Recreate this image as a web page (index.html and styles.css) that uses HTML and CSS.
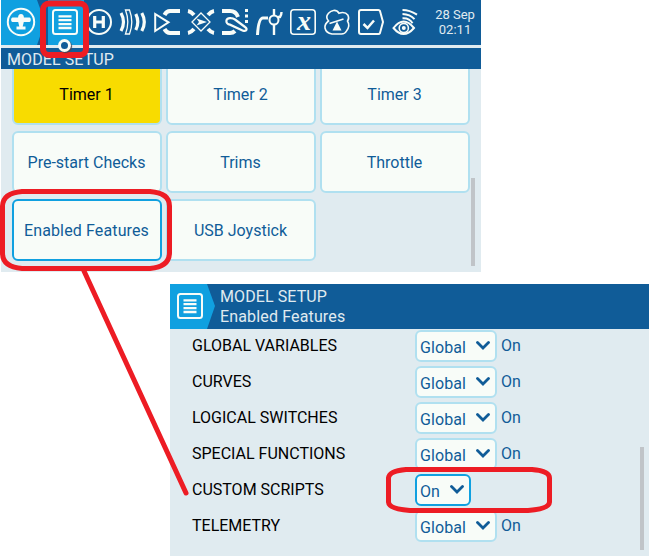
FILE: index.html
```html
<!DOCTYPE html>
<html lang="en">
<head>
<meta charset="utf-8">
<title>Model Setup</title>
<link rel="stylesheet" href="styles.css">
</head>
<body>
<main class="page">
  <section class="panel setup">
    <header class="topbar">
      <div class="home">
        <svg class="home-icon" viewBox="0 0 30 30"><circle cx="15" cy="15" r="13.2" fill="none" stroke="#f8fcf8" stroke-width="2"/><path d="M15 7c2 0 2.800 1.500 2.900 3.500h5.600c1.800 0 1.800 4.500 0 4.500h-5.700l-1.100 4.500h2.800v3h-9v-3h2.800L12.200 15H6.500c-1.800 0-1.800-4.500 0-4.500h5.600C12.200 8.500 13 7 15 7z" fill="#f8fcf8"/></svg>
      </div>
      <nav class="tabs">
        <span class="tab selected"><svg class="icon" viewBox="0 0 26 26"><rect x="1" y="1" width="24" height="24" rx="2.500"/><path class="lines" d="M6.500 7.300h13M6.500 11.200h13M6.500 15.100h13M6.500 19h13"/></svg></span>
        <svg class="icon" viewBox="0 0 26 26"><circle cx="13" cy="13" r="12"/><path d="M8.700 7v12M17.300 7v12M8.700 13h8.600" stroke-width="3.200"/></svg>
        <svg class="icon" viewBox="0 0 26 26"><path d="M1 4q5 9 0 18M15.800 5q4 8 0 16M21.800 4q5 9 0 18" stroke-width="3.200"/><path d="M5.500 1h4q4.600 12 0 24h-4q4.600-12 0-24z" stroke-width="1.300"/></svg>
        <svg class="icon" viewBox="0 0 26 26"><path d="M1.200 5v17L14.500 13.300z"/><path d="M26 2H16q-3.500 0-5.500 4M26 24H16q-3.500 0-5.500-4" stroke-width="4"/></svg>
        <svg class="icon" viewBox="0 0 26 26"><path d="M0 2q3 .5 6 4M26 2q-3 .5-6 4M0 24q3-.5 6-4M26 24q-3-.5-6-4" stroke-width="4"/><path d="M13 4l9 9-9 9-9-9z" stroke-width="1.300"/><path class="solid" d="M8.500 9.500L19 13 8.500 16.500l2.500-3.500z"/></svg>
        <svg class="icon" viewBox="0 0 26 26"><path d="M0 2h8q6 0 8 6M0 24h8q3 0 5-2" stroke-width="4"/><path d="M9 9.200c-6-1-6 6-1 6.500l13 6c4 1 4.500-2 2-3.700L13 10.500q-2-1.200-4-1.300z" stroke-width="2.200"/><path class="solid" d="M23 0h3v3h-3zM23 5.500h3v3h-3zM23 11h3v3h-3z"/></svg>
        <svg class="icon" viewBox="0 0 26 26"><path d="M1.500 26Q2.500 9 7 9h5" stroke-width="3"/><path d="M18 0v6M18 16v10M22 8h2q1.500-2 1.500-5" stroke-width="2.400"/><circle cx="18" cy="11" r="4.500"/></svg>
        <svg class="icon" viewBox="0 0 26 26"><rect x=".8" y=".8" width="24.400" height="24.400" rx="3" stroke-width="1.600"/><text x="14" y="21">x</text></svg>
        <svg class="icon" viewBox="0 0 26 26"><path d="M4.500 12Q1 8 4.500 4.200C7 1.500 12-.5 15 4.200q6-2 9 2 1.500 3.500-.5 5.800 3 5-1 10-1.500 3-5 3H8q-6-1-7-6-.5-4 3.500-7z" stroke-width="1.600"/><path d="M5.500 14.500L19.500 10" stroke-width="1.600"/><path class="solid" d="M13 12.500l4.500 9h-9z"/></svg>
        <svg class="icon" viewBox="0 0 26 26"><path d="M3 1h17.500q1 0 1.500 1l3 11-3 11q-.5 1-1.500 1H3q-2 0-2-2V3q0-2 2-2z"/><path d="M5.500 15l4 4 6.500-7.500" stroke-width="2.500"/></svg>
        <svg class="icon" viewBox="0 0 26 26"><path d="M1.500 19q10-13 20.500 0-10.500 12-20.500 0z"/><circle cx="11.800" cy="19" r="4.600" stroke-width="1.600"/><circle class="solid" cx="11.800" cy="19" r="2"/><path d="M10.500 9.300q7-.5 10 5M10.500 5q7.500.2 12 5.200M10.500 1q7 0 14.500 4.600"/></svg>
      </nav>
      <div class="clock">28 Sep<br>02:11</div>
      <i class="marker"></i>
    </header>
    <div class="title">MODEL SETUP</div>
    <div class="viewport">
      <div class="grid">
        <button class="tile active">Timer 1</button>
        <button class="tile">Timer 2</button>
        <button class="tile">Timer 3</button>
        <button class="tile">Pre-start Checks</button>
        <button class="tile">Trims</button>
        <button class="tile">Throttle</button>
        <button class="tile focused">Enabled Features</button>
        <button class="tile">USB Joystick</button>
      </div>
      <i class="scrollbar"></i>
    </div>
  </section>

  <section class="panel features">
    <header class="subheader">
      <div class="menu"><svg class="icon" viewBox="0 0 26 26"><rect x="1" y="1" width="24" height="24" rx="2.500"/><path class="lines" d="M6.500 7.300h13M6.500 11.200h13M6.500 15.100h13M6.500 19h13"/></svg></div>
      <div class="heading">MODEL SETUP<br><span class="subtitle">Enabled Features</span></div>
    </header>
    <div class="rows">
      <div class="row"><span class="label">GLOBAL VARIABLES</span><span class="select">Global<svg class="chevron" viewBox="0 0 14 9"><path d="M1.500 1.500L7 7l5.500-5.500"/></svg></span><span class="state">On</span></div>
      <div class="row"><span class="label">CURVES</span><span class="select">Global<svg class="chevron" viewBox="0 0 14 9"><path d="M1.500 1.500L7 7l5.500-5.500"/></svg></span><span class="state">On</span></div>
      <div class="row"><span class="label">LOGICAL SWITCHES</span><span class="select">Global<svg class="chevron" viewBox="0 0 14 9"><path d="M1.500 1.500L7 7l5.500-5.500"/></svg></span><span class="state">On</span></div>
      <div class="row"><span class="label">SPECIAL FUNCTIONS</span><span class="select">Global<svg class="chevron" viewBox="0 0 14 9"><path d="M1.500 1.500L7 7l5.500-5.500"/></svg></span><span class="state">On</span></div>
      <div class="row"><span class="label">CUSTOM SCRIPTS</span><span class="select short focused">On<svg class="chevron" viewBox="0 0 14 9"><path d="M1.500 1.500L7 7l5.500-5.500"/></svg></span></div>
      <div class="row"><span class="label">TELEMETRY</span><span class="select">Global<svg class="chevron" viewBox="0 0 14 9"><path d="M1.500 1.500L7 7l5.500-5.500"/></svg></span><span class="state">On</span></div>
    </div>
    <i class="scrollbar"></i>
  </section>

  <svg class="annotations" viewBox="0 0 649 556">
    <rect class="heavy" x="43" y="3.500" width="43" height="51.500" rx="6"/>
    <path d="M22 191.500H150Q169.500 193 169.500 206V253Q169 267 150 268.500H22Q2.500 267 2.500 253V206Q3 193 22 191.500z"/>
    <path d="M84 271L186 493"/>
    <path d="M406 469.500H532Q549.500 471 549.500 478V502Q549 509 528 510.500H410Q389 509 388.500 502V478Q389 471 406 469.500z"/>
  </svg>
</main>
</body>
</html>
```
FILE: styles.css
```css
* { box-sizing: border-box; }
body { margin: 0; background: #fff; font-family: Roboto, "Liberation Sans", sans-serif; font-size: 16px; color: #105c98; }
.page { position: relative; width: 649px; height: 556px; overflow: hidden; display: flex; flex-direction: column; gap: 12px; }
.panel { position: relative; background: #e0ebf0; height: 272px; flex: none; }
.setup { width: 480px; margin-left: 1px; display: flex; flex-direction: column; }
.topbar { position: relative; height: 48px; flex: none; background: #105c98; border-bottom: 3px solid #e0ebf0; display: flex; }
.home { width: 47px; background: #10a0e0; clip-path: polygon(0 0, 36px 0, 44px 22px, 36px 45px, 0 45px); flex: none; padding: 7px 0 0 5px; }
.home-icon { display: block; width: 30px; height: 30px; }
.tabs { display: flex; gap: 8px; height: 45px; padding-top: 9px; }
.tab { width: 36px; height: 45px; margin: -9px -6px 0 0; padding: 9px 0 0 4px; background: #10a0e0; }
.icon { display: block; width: 26px; height: 26px; flex: none; fill: none; stroke: #f8fcf8; stroke-width: 2; overflow: visible; }
.icon .solid { fill: #f8fcf8; stroke: none; }
.icon .lines { stroke-width: 2.3; }
.icon text { fill: #f8fcf8; stroke: none; font: italic bold 28px "Liberation Serif", serif; text-anchor: middle; }
.clock { margin-left: auto; width: 52px; text-align: center; font-size: 13px; line-height: 15px; padding-top: 7px; color: #e0ebf0; }
.marker { position: absolute; left: 57px; top: 39px; width: 13px; height: 13px; border: 3px solid #f8fcf8; border-radius: 50%; background: #105c98; box-shadow: 1px 1px 1px #445; z-index: 6; }
.title { height: 21px; flex: none; background: #105c98; color: #e0ebf0; line-height: 23px; padding-left: 6px; letter-spacing: .1px; }
.viewport { flex: 1; overflow: hidden; position: relative; padding-left: 11px; }
.grid { display: grid; grid-template-columns: repeat(3, 150px); grid-auto-rows: 62px; gap: 6px 4px; margin-top: -6px; }
.tile { font: inherit; color: #105c98; background: #f8fcf8; border: 2px solid #b0e0f0; border-radius: 6px; padding: 0 1px 0 0; }
.tile.active { background: #f8dc00; color: #000; }
.tile.focused { border-color: #10a0e0; letter-spacing: .13px; }
.scrollbar { position: absolute; background: #c0c4c8; width: 4px; }
.setup .scrollbar { left: 470px; top: 109px; height: 88px; }
.features { width: 479px; margin-left: 170px; overflow: hidden; }
.subheader { height: 45px; background: #105c98; display: flex; color: #e0ebf0; }
.menu { width: 45px; background: #10a0e0; clip-path: polygon(0 0, 37px 0, 45px 22px, 37px 45px, 0 45px); padding: 9px 0 0 7px; }
.heading { padding: 3px 0 0 5px; line-height: 20px; letter-spacing: .1px; }
.subtitle { letter-spacing: .15px; }
.rows { padding: 1px 0 0 22px; }
.row { height: 36px; display: flex; align-items: flex-start; }
.label { width: 223px; line-height: 32px; color: #000; }
.select { width: 82px; height: 32px; border: 2px solid #b0e0f0; border-radius: 6px; background: #f8fcf8; display: flex; justify-content: space-between; padding: 0 5px 0 3px; line-height: 32px; letter-spacing: .1px; }
.select.short { width: 56px; }
.select.focused { border-color: #10a0e0; }
.state { margin-left: 4px; line-height: 32px; }
.chevron { width: 14px; height: 9px; margin-top: 9px; fill: none; stroke: #105c98; stroke-width: 2.8; stroke-linecap: round; }
.features .scrollbar { left: 470px; top: 163px; height: 103px; }
.annotations { position: absolute; inset: 0; width: 649px; height: 556px; fill: none; stroke: #ed1c24; stroke-width: 5; z-index: 3; stroke-linecap: round; pointer-events: none; }
.heavy { stroke-width: 6; }
```
